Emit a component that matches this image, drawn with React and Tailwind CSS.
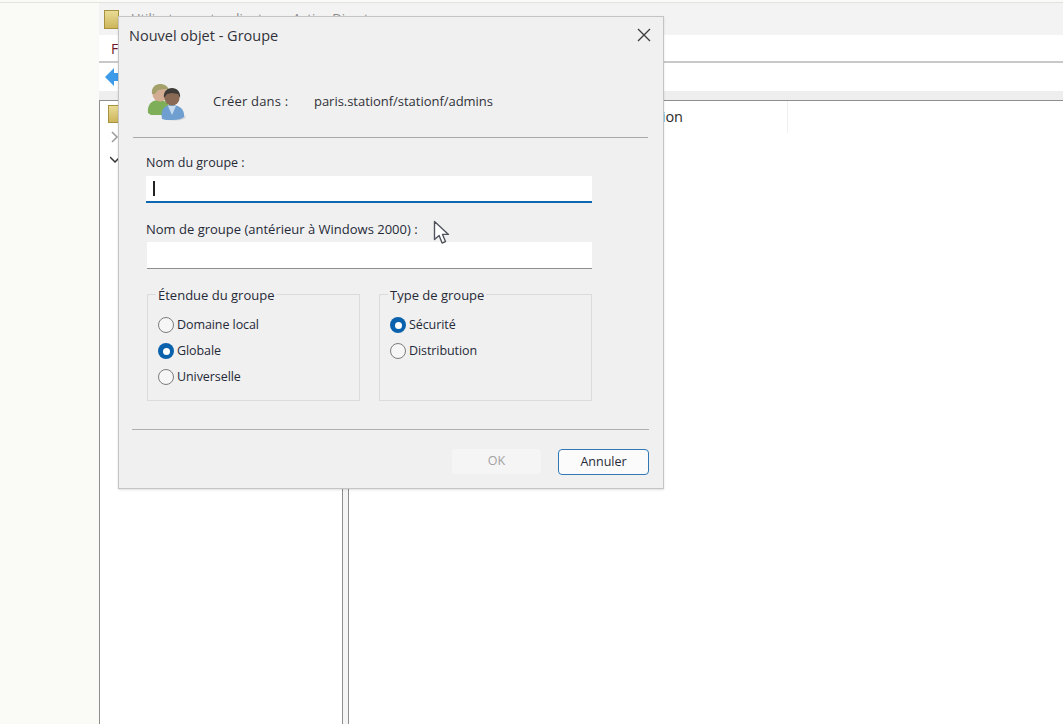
const font = "font-['Open_Sans',sans-serif]";

function Radio({ checked, label }) {
  return (
    <div className="flex items-center h-[26px]">
      {checked ? (
        <span className="w-4 h-4 rounded-full bg-[#0a62ad] flex items-center justify-center shrink-0">
          <span className="w-[7px] h-[7px] rounded-full bg-white" />
        </span>
      ) : (
        <span className="w-4 h-4 rounded-full border border-[#7d7d7d] bg-[#f6f6f6] shrink-0" />
      )}
      <span className="ml-[3px] text-[12.5px] tracking-[-0.08px] text-[#262a38]">{label}</span>
    </div>
  );
}

function Box({ title, children }) {
  return (
    <div className="relative h-[107px] w-[213px] border border-[#dcdcdc] pt-[17px] pl-[10px]">
      <span className="absolute -top-[8px] left-[8px] bg-[#f0f0f0] px-[2px] text-[13px] leading-[16px] text-[#262a38]">{title}</span>
      {children}
    </div>
  );
}

function People() {
  return (
    <svg width="40" height="38" viewBox="0 0 40 38" className="block">
      <ellipse cx="27" cy="34" rx="12" ry="3.5" fill="#d4d6d8" />
      <path d="M1 30c-1-9 4-13 11-13s11 4 11 13l-3 2H4z" fill="#7fae58" />
      <circle cx="13" cy="11" r="7.5" fill="#d2ad92" />
      <path d="M5 11C4 5 8 1 13 1c4 0 8 2 9 6l-5-1-6 1-3 4z" fill="#a3a06a" />
      <path d="M15 36c-2-10 3-14 10-14s13 4 12 12c-2 2-6 3-11 3s-9 0-11-1z" fill="#6f9fd0" />
      <path d="M21 23l4 9 4-9z" fill="#c9dcee" />
      <circle cx="25" cy="15" r="7.5" fill="#8a6a55" />
      <path d="M17 15c-1-6 3-10 8-10s9 4 8 10l-2-4-6-1-5 1z" fill="#3d3a38" />
    </svg>
  );
}

function Cursor() {
  return (
    <svg width="17" height="25" viewBox="0 0 17 25" className="absolute left-[314px] top-[203px]">
      <path d="M1.5 1.5v18l4.6-4 3 7.5 3.4-1.4-3-7.2h6z" fill="#fff" stroke="#50545c" strokeWidth="1.4" strokeLinejoin="round" />
    </svg>
  );
}

function Dialog() {
  return (
    <div className="absolute left-[118px] top-[16px] w-[546px] h-[473px] bg-[#f0f0f0] border border-[#c4c4c4] shadow-[0_1px_2px_rgba(0,0,0,0.12)] flex flex-col">
      <div className="flex items-center justify-between h-[37px] pl-[10px] pr-[12px]">
        <span className="text-[14.5px] text-[#30323a]">Nouvel objet - Groupe</span>
        <svg width="14" height="14" viewBox="0 0 14 14" className="-mt-[2px]">
          <path d="M1 1l12 12M13 1L1 13" stroke="#3a3a3a" strokeWidth="1.3" />
        </svg>
      </div>
      <div className="ml-[14px] mr-[15px] h-[84px] border-b border-[#a9a9a9] flex items-center pt-[12px]">
        <div className="w-[66px] ml-[14px] shrink-0"><People /></div>
        <span className="text-[13px] tracking-[0.2px] text-[#30323a] w-[101px] shrink-0">Créer dans :</span>
        <span className="text-[13px] tracking-[-0.03px] text-[#30323a]">paris.stationf/stationf/admins</span>
      </div>
      <div className="pl-[27px] pr-[71px] pt-[15px]">
        <div className="text-[12.5px] leading-[20px] text-[#262a38]">Nom du groupe :</div>
        <div className="mt-[3px] h-[27px] bg-white border-b-2 border-[#0f67b1] flex items-center pl-[7px]">
          <span className="w-[2px] h-[15px] bg-[#222]" />
        </div>
        <div className="mt-[17px] text-[13px] leading-[18px] text-[#262a38]">Nom de groupe (antérieur à Windows 2000) :</div>
        <div className="mt-[4px] ml-px h-[27px] bg-white border-b border-[#8d8d8d]" />
        <div className="flex gap-[19px] mt-[25px] ml-px">
          <Box title="Étendue du groupe">
            <Radio label="Domaine local" />
            <Radio checked label="Globale" />
            <Radio label="Universelle" />
          </Box>
          <Box title="Type de groupe">
            <Radio checked label="Sécurité" />
            <Radio label="Distribution" />
          </Box>
        </div>
      </div>
      <div className="ml-[13px] mr-[14px] mt-[28px] border-t border-[#b0b0b0] flex justify-end gap-[17px] pt-[19px]">
        <div className="w-[89px] h-[25px] rounded-[3px] bg-[#f5f5f5] flex items-center justify-center text-[12.5px] text-[#a2a2a2]">OK</div>
        <div className="w-[91px] h-[26px] rounded-[4px] bg-[#fbfbfb] border-[1.5px] border-[#2f78b4] flex items-center justify-center text-[12.5px] text-[#262a38]">Annuler</div>
      </div>
      <Cursor />
    </div>
  );
}

export default function App() {
  return (
    <div className={`relative w-[1063px] h-[724px] overflow-hidden bg-white flex flex-col ${font}`}>
      <div className="h-[3px] bg-[#fafaf7] border-b border-[#e2e2de] shrink-0" />
      <div className="flex flex-1 min-h-0">
        <div className="w-[99px] bg-[#fafaf7] shrink-0" />
        <div className="flex-1 flex flex-col min-w-0">
          <div className="h-[32px] bg-[#f3f3f3] flex items-center pl-[5px] gap-[12px] shrink-0">
            <span className="w-[15px] h-[19px] bg-gradient-to-b from-[#e9dc96] to-[#cdb65a] border border-[#a8923f] block shrink-0" />
            <span className="text-[13px] text-[#8a8a8a]">Utilisateurs et ordinateurs Active Directory</span>
          </div>
          <div className="h-[28px] bg-white border-b-2 border-[#c9c9c9] flex items-center pl-[12px] text-[14px] text-[#6e1a24] shrink-0">F</div>
          <div className="h-[28px] bg-white flex items-center pl-[6px] shrink-0">
            <svg width="14" height="18" viewBox="0 0 14 18"><path d="M0 9l9-9v5h5v8H9v5z" fill="#3d9be9" /></svg>
          </div>
          <div className="h-[10px] bg-[#eeeeee] border-b border-[#8e8e8e] shrink-0" />
          <div className="flex-1 flex min-h-0 border-l border-[#8e8e8e]">
            <div className="w-[243px] border-r border-[#8e8e8e] pl-[8px] pt-[4px] shrink-0">
              <span className="w-[11px] h-[18px] bg-gradient-to-b from-[#e9dc96] to-[#cdb65a] border border-[#a8923f] block" />
              <svg width="10" height="12" viewBox="0 0 10 12" className="mt-[8px] ml-[2px]"><path d="M2 1l5 5-5 5" fill="none" stroke="#9a9a9a" strokeWidth="1.5" /></svg>
              <svg width="10" height="10" viewBox="0 0 10 10" className="mt-[12px] ml-[2px]"><path d="M0 2l5 5 5-5" fill="none" stroke="#333" strokeWidth="1.5" /></svg>
            </div>
            <div className="w-[5px] bg-[#f4f4f4] shrink-0" />
            <div className="flex-1 border-l border-[#8e8e8e] min-w-0">
              <div className="flex h-[32px] items-center">
                <div className="w-[439px] h-full border-r border-[#efefef] flex items-center justify-end pr-[104px] text-[14.5px] text-[#2a2a2a]">ion</div>
              </div>
            </div>
          </div>
        </div>
      </div>
      <Dialog />
    </div>
  );
}
